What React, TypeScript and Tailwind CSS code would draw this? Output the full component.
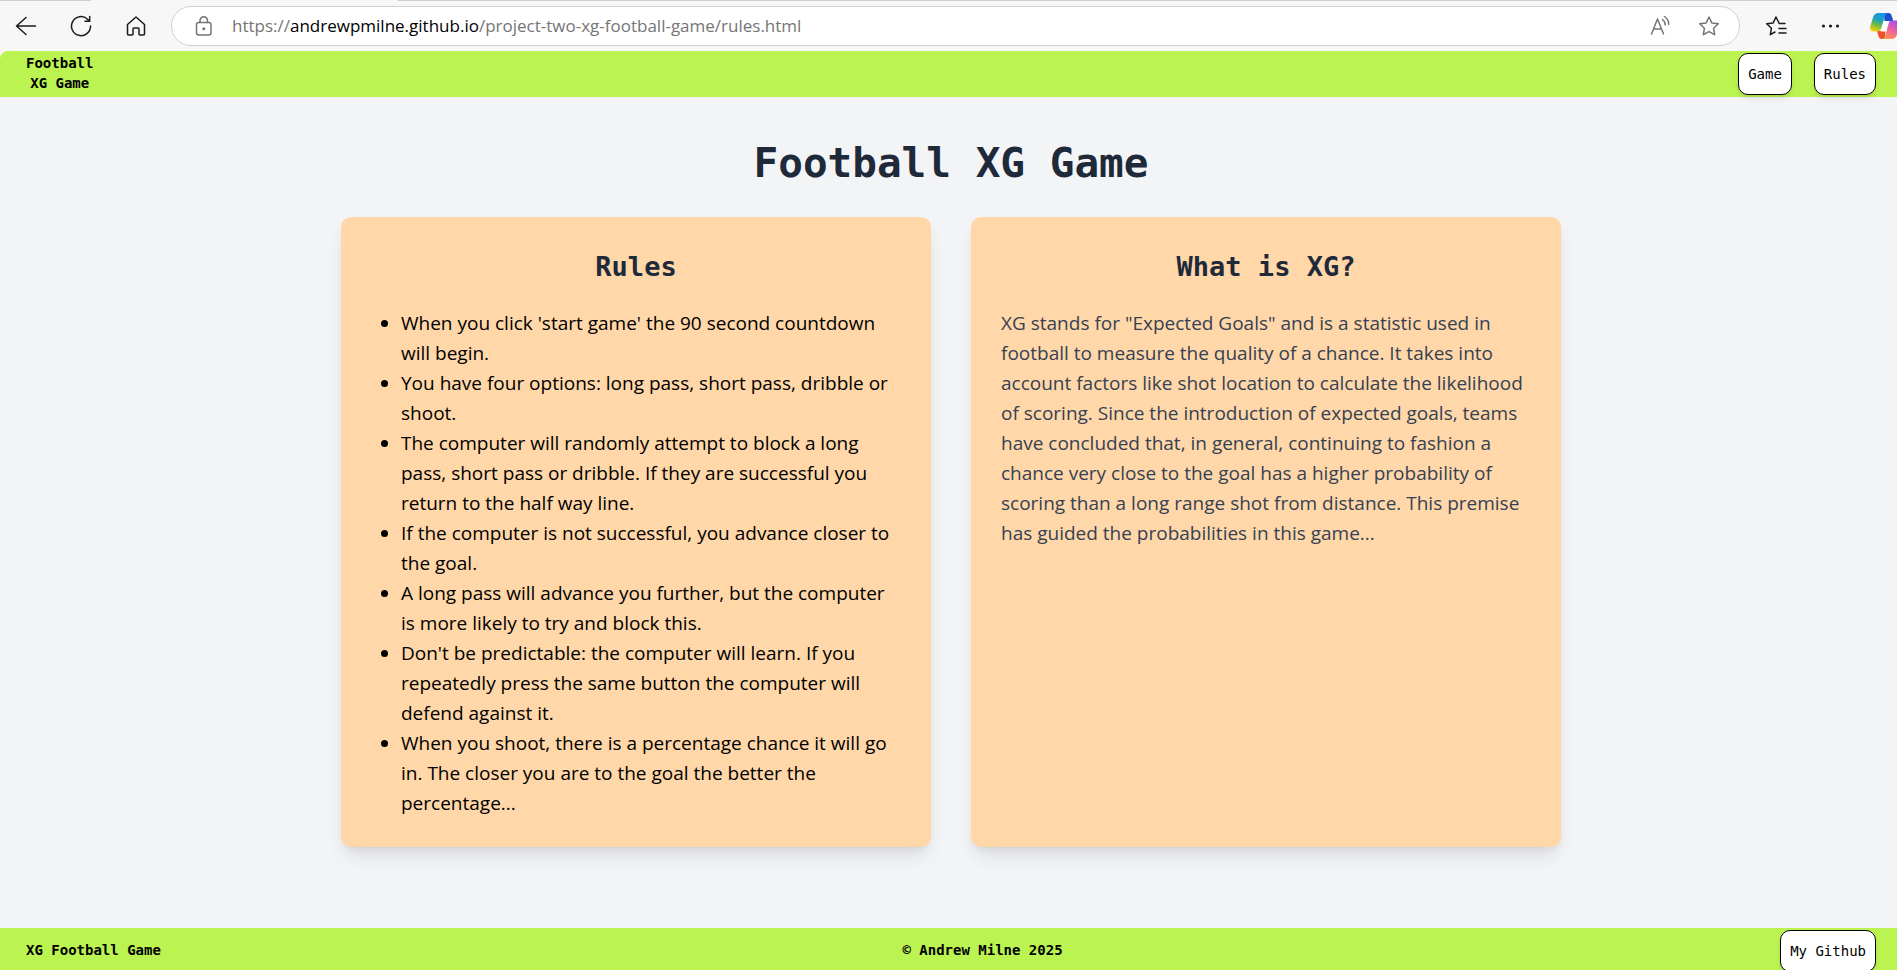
import type { ReactNode } from "react";

const rules = [
  "When you click 'start game' the 90 second countdown will begin.",
  "You have four options: long pass, short pass, dribble or shoot.",
  "The computer will randomly attempt to block a long pass, short pass or dribble. If they are successful you return to the half way line.",
  "If the computer is not successful, you advance closer to the goal.",
  "A long pass will advance you further, but the computer is more likely to try and block this.",
  "Don't be predictable: the computer will learn. If you repeatedly press the same button the computer will defend against it.",
  "When you shoot, there is a percentage chance it will go in. The closer you are to the goal the better the percentage...",
];

function IconButton({ label, className, children }: { label: string; className?: string; children: ReactNode }) {
  return (
    <button type="button" aria-label={label} className={`flex size-6 shrink-0 items-center justify-center ${className ?? ""}`}>
      <svg viewBox="0 0 24 24" className="size-6 overflow-visible" fill="none" stroke="currentColor" strokeWidth="1.5" strokeLinecap="round" strokeLinejoin="round">
        {children}
      </svg>
    </button>
  );
}

function CopilotLogo() {
  return (
    <svg viewBox="0 0 30 26" className="h-[26px] w-[30px] shrink-0" aria-hidden="true">
      <defs>
        <linearGradient id="cp-left" x1="0.6" y1="0" x2="0.3" y2="1">
          <stop offset="0" stopColor="#1694ec" />
          <stop offset="0.35" stopColor="#1c9fc0" />
          <stop offset="0.65" stopColor="#6cba45" />
          <stop offset="1" stopColor="#fbd20e" />
        </linearGradient>
        <linearGradient id="cp-right" x1="0.7" y1="0" x2="0.3" y2="1">
          <stop offset="0" stopColor="#a64df0" />
          <stop offset="0.5" stopColor="#f0609c" />
          <stop offset="1" stopColor="#ff9c50" />
        </linearGradient>
      </defs>
      <path d="M14 0h4.500c1.700 0 2.700 1 3.200 2.700L23.300 8H19c-2.500 0-3.500 1-4.300 3.500z" fill="#1b4fcb" />
      <path d="M7 18h5l3-9 .5 15.500-1.500 1.500h-2c-2 0-3-1-3.500-2.800z" fill="#f1502e" />
      <path d="M13.500 8h5l-2.500 10.500h-5z" fill="#fff" />
      <path d="M8.500 0H18c-1.800 0-2.600 1.300-3.200 3.300L11.300 15c-.7 2.300-1.800 3.500-4.300 3.500H3.500c-2.800 0-4-2-3.200-5L3 4.500C4 1.500 5.600 0 8.500 0z" fill="url(#cp-left)" />
      <path d="M21.500 7.500h5c2.800 0 4 2 3.200 5L27 21.500c-1 3-2.600 4.500-5.500 4.500H12c1.800 0 2.600-1.300 3.200-3.300L18.500 11c.6-2.300 1-3.500 3-3.500z" fill="url(#cp-right)" />
    </svg>
  );
}

function BrowserBar() {
  return (
    <div className="shrink-0">
      <div className="flex h-px justify-between" aria-hidden="true">
        <span className="w-[91px] bg-[#cfcfcf]" />
        <span className="ml-[307px] flex-1 bg-[#cfcfcf]" />
      </div>
      <div className="flex h-[50px] items-center text-[#1b1b1b]">
        <div className="flex shrink-0 items-center gap-[31px] pl-[14px]">
          <IconButton label="Back">
            <path d="M21.500 12H2.500M12 3.500 2.500 12l9.500 8.500" />
          </IconButton>
          <IconButton label="Refresh">
            <path d="M21.500 12A9.500 9.500 0 1 1 18.500 5.200L20.500 7M20.700 2.500V7.200H16" />
          </IconButton>
          <IconButton label="Home">
            <path d="M3.500 10.500 12 3l8.500 7.500V20a1 1 0 0 1-1 1H16a1 1 0 0 1-1-1v-5a1 1 0 0 0-1-1h-4a1 1 0 0 0-1 1v5a1 1 0 0 1-1 1H4.500a1 1 0 0 1-1-1z" />
          </IconButton>
        </div>
        <div className="ml-[23px] flex h-10 min-w-0 flex-1 items-center rounded-full border border-[#d0d0d0] bg-white pr-[18px] pl-5 text-[#757575]">
          <IconButton label="Site information">
            <rect x="4.500" y="8.500" width="14.500" height="12.500" rx="2.200" />
            <path d="M8 8.500V6.500a3.700 3.700 0 0 1 7.500 0v2" />
            <circle cx="11.800" cy="14.800" r="0.800" fill="currentColor" />
          </IconButton>
          <div role="textbox" aria-label="Address" tabIndex={0} className="ml-4 min-w-0 flex-1 truncate font-['Open_Sans',sans-serif] text-[17px]">
            https://<span className="text-black">andrewpmilne.github.io</span>/project-two-xg-football-game/rules.html
          </div>
          <IconButton label="Read aloud">
            <path d="M3.500 20 9.500 5l6 15M5.600 15h7.800M14.500 5.500a7 7 0 0 1 2.800 5.500M16.500 2.500a10 10 0 0 1 4.300 8" />
          </IconButton>
          <IconButton label="Add to favourites" className="ml-[25px]">
            <path d="m12 3 2.800 5.900 6.500.9-4.700 4.500 1.100 6.400L12 17.600l-5.700 3.100 1.100-6.400-4.700-4.500 6.500-.9z" />
          </IconButton>
        </div>
        <div className="flex shrink-0 items-center pl-6">
          <IconButton label="Favourites">
            <path d="M21 9.500h-5.800L12 3 9.200 8.900l-6.500.9 4.700 4.500-1.100 6.400L11 18M15 14.500h7M15 19h7" />
          </IconButton>
          <IconButton label="More" className="ml-[31px]">
            <g fill="currentColor" stroke="none">
              <circle cx="4.500" cy="12" r="1.600" />
              <circle cx="11.500" cy="12" r="1.600" />
              <circle cx="18.500" cy="12" r="1.600" />
            </g>
          </IconButton>
          <button type="button" aria-label="Copilot" className="ml-[27px] flex w-[27px] justify-start overflow-hidden">
            <CopilotLogo />
          </button>
        </div>
      </div>
    </div>
  );
}

function NavLink({ href, children }: { href: string; children: ReactNode }) {
  return (
    <a href={href} className="rounded-[10px] border border-black bg-white px-[9px] py-[10px] font-normal shadow-md">
      {children}
    </a>
  );
}

function Card({ title, children }: { title: string; children: ReactNode }) {
  return (
    <section className="rounded-[10px] bg-orange-200 px-[30px] pt-[30px] pb-[29px] shadow-[0_12px_19px_-4px_rgba(0,0,0,0.1),0_5px_8px_-5px_rgba(0,0,0,0.1)]">
      <h2 className="mb-[21px] text-center font-['DejaVu_Sans_Mono',monospace] text-[27px] leading-10 font-bold text-gray-800">{title}</h2>
      {children}
    </section>
  );
}

export default function App() {
  return (
    <div className="flex h-screen flex-col overflow-hidden bg-[#f7f7f7]">
      <BrowserBar />
      <div className="flex flex-1 flex-col overflow-hidden rounded-tl-lg bg-gray-100 font-['Open_Sans',sans-serif] text-[19px] leading-[30px] text-black">
        <header className="flex h-[46px] shrink-0 items-center justify-between bg-lime-300 pr-[21px] pl-[26px] font-['DejaVu_Sans_Mono',monospace] text-[14px] leading-5">
          <p className="pb-[2px] text-center font-bold">
            Football
            <br />
            XG Game
          </p>
          <nav className="flex gap-[22px]">
            <NavLink href="#game">Game</NavLink>
            <NavLink href="#rules">Rules</NavLink>
          </nav>
        </header>
        <main className="shrink-0 pt-[41px] pb-[81px] pl-[5px]">
          <h1 className="mb-[29px] text-center font-['DejaVu_Sans_Mono',monospace] text-[41px] leading-[50px] font-bold text-gray-800">Football XG Game</h1>
          <div className="mx-auto grid max-w-[1220px] grid-cols-2 gap-10">
            <Card title="Rules">
              <ul className="list-disc pl-[30px]">
                {rules.map((rule) => (
                  <li key={rule}>{rule}</li>
                ))}
              </ul>
            </Card>
            <Card title="What is XG?">
              <p className="text-gray-700">
                XG stands for "Expected Goals" and is a statistic used in football to measure the quality of a chance. It takes into account factors like shot location to calculate the likelihood of scoring. Since the introduction of expected goals, teams have concluded that, in general, continuing to fashion a chance very close to the goal has a higher probability of scoring than a long range shot from distance. This premise has guided the probabilities in this game...
              </p>
            </Card>
          </div>
        </main>
        <footer className="flex h-[46px] shrink-0 items-center justify-between bg-lime-300 pr-[21px] pl-[26px] font-['DejaVu_Sans_Mono',monospace] text-[14px] leading-5 font-bold">
          <p className="pr-6 pb-[2px]">XG Football Game</p>
          <p className="pb-[2px]">© Andrew Milne 2025</p>
          <NavLink href="#github">My Github</NavLink>
        </footer>
      </div>
    </div>
  );
}
